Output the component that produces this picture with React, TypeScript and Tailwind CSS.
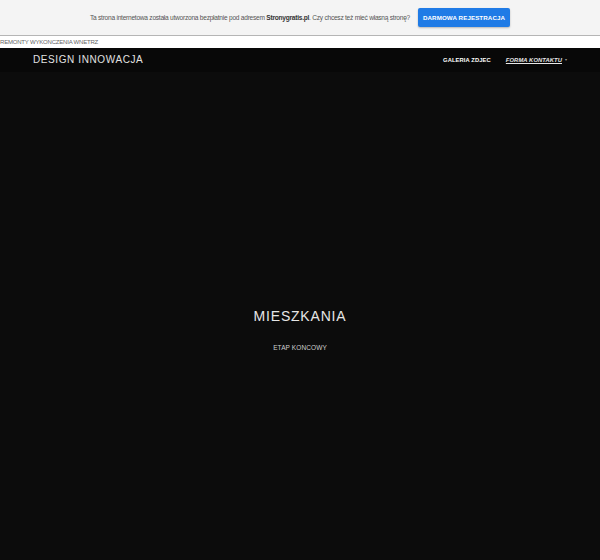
import React from "react";

export default function App() {
  const font = { fontFamily: '"Liberation Sans", Arial, sans-serif' };
  return (
    <div className="w-[600px] h-[560px] overflow-hidden bg-[#0c0c0c] flex flex-col" style={font}>
      <div className="h-[36px] bg-[#f4f4f4] border-b border-[#b5b5b5] flex items-center justify-center gap-[8px] shrink-0">
        <span className="text-[6.6px] text-[#555] tracking-[-0.25px] whitespace-nowrap">
          Ta strona internetowa została utworzona bezpłatnie pod adresem{" "}
          <b className="text-[#333]">Stronygratis.pl</b>. Czy chcesz też mieć własną stronę?
        </span>
        <span className="h-[19px] w-[92px] bg-[#1f7be6] rounded-[2px] shadow-[0_1px_2px_rgba(0,0,0,0.25)] flex items-center justify-center text-white text-[6.2px] font-bold tracking-[0.1px] whitespace-nowrap">
          DARMOWA REJESTRACJA
        </span>
      </div>
      <div className="h-[12px] bg-white flex items-center shrink-0">
        <span className="text-[6px] text-[#666] tracking-[-0.2px] leading-none">REMONTY WYKONCZENIA WNETRZ</span>
      </div>
      <div className="h-[24px] bg-[#080808] flex items-center justify-between pl-[33px] pr-[33px] shrink-0">
        <span className="text-[10px] text-[#e2e2e2] tracking-[0.6px] leading-none">DESIGN INNOWACJA</span>
        <div className="flex items-center gap-[15px]">
          <span className="text-[5.8px] font-bold text-white tracking-[0.1px]">GALERIA ZDJEC</span>
          <span className="flex items-center gap-[3px]">
            <span className="text-[5.8px] font-bold italic underline text-[#e8e8e8] tracking-[0.1px]">FORMA KONTAKTU</span>
            <span className="text-[4px] text-[#999]">▾</span>
          </span>
        </div>
      </div>
      <div className="flex-1 flex flex-col items-center pt-[237px]">
        <span className="text-[14px] text-[#e6e6e6] tracking-[0.8px] leading-none">MIESZKANIA</span>
        <span className="mt-[22px] text-[6.5px] text-[#cfcfcf] tracking-[0.1px] leading-none">ETAP KONCOWY</span>
      </div>
    </div>
  );
}
